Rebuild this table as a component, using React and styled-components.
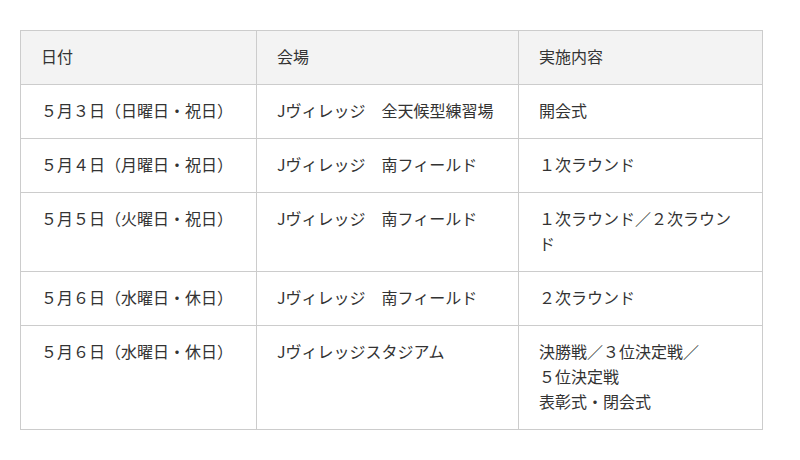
import React from 'react';
import styled, { createGlobalStyle } from 'styled-components';

const GlobalStyle = createGlobalStyle`
  body {
    margin: 0;
    background: #ffffff;
    font-family: "Noto Sans CJK JP", "Noto Sans", sans-serif;
    color: #333333;
  }
`;

const Page = styled.div`
  padding: 30px 0 0 20px;
`;

const Table = styled.table`
  width: 742px;
  border-collapse: collapse;
  table-layout: fixed;
  font-size: 16px;
  line-height: 25px;
`;

const Col = styled.col`
  width: ${(p) => p.w}px;
`;

const Head = styled.th`
  background: #f3f3f3;
  border: 1px solid #cccccc;
  padding: 13px 20px 15px;
  text-align: left;
  font-weight: normal;
  vertical-align: top;
`;

const Cell = styled.td`
  border: 1px solid #cccccc;
  padding: 13px 20px 15px;
  vertical-align: top;
`;

const rows = [
  ['５月３日（日曜日・祝日）', 'Jヴィレッジ　全天候型練習場', ['開会式']],
  ['５月４日（月曜日・祝日）', 'Jヴィレッジ　南フィールド', ['１次ラウンド']],
  ['５月５日（火曜日・祝日）', 'Jヴィレッジ　南フィールド', ['１次ラウンド／２次ラウンド']],
  ['５月６日（水曜日・休日）', 'Jヴィレッジ　南フィールド', ['２次ラウンド']],
  ['５月６日（水曜日・休日）', 'Jヴィレッジスタジアム', ['決勝戦／３位決定戦／', '５位決定戦', '表彰式・閉会式']],
];

export default function App() {
  return (
    <>
      <GlobalStyle />
      <Page>
        <Table>
          <colgroup>
            <Col w={236} />
            <Col w={262} />
            <Col w={244} />
          </colgroup>
          <thead>
            <tr>
              <Head>日付</Head>
              <Head>会場</Head>
              <Head>実施内容</Head>
            </tr>
          </thead>
          <tbody>
            {rows.map((r, i) => (
              <tr key={i}>
                <Cell>{r[0]}</Cell>
                <Cell>{r[1]}</Cell>
                <Cell>
                  {r[2].map((line, j) => (
                    <React.Fragment key={j}>
                      {j > 0 && <br />}
                      {line}
                    </React.Fragment>
                  ))}
                </Cell>
              </tr>
            ))}
          </tbody>
        </Table>
      </Page>
    </>
  );
}
